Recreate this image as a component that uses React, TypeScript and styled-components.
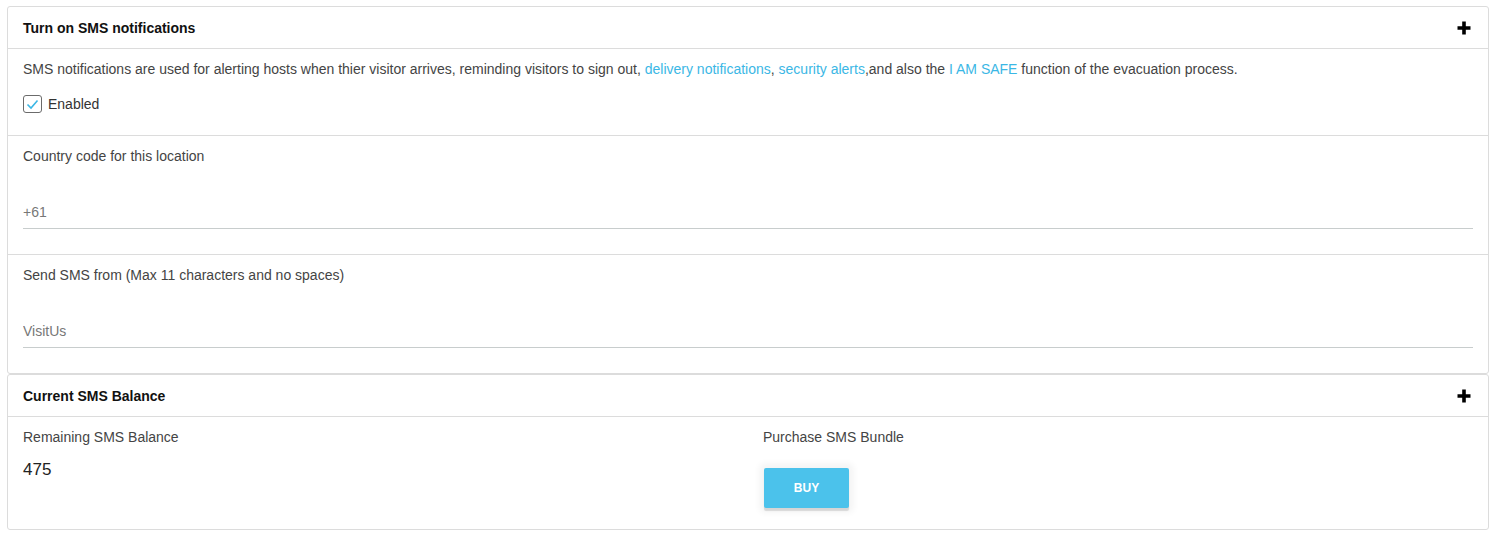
import styled, { createGlobalStyle } from 'styled-components';

const GlobalStyle = createGlobalStyle`
  body {
    margin: 0;
    padding: 6px 11px 0 7px;
    background: #fff;
    font-family: 'Liberation Sans', Arial, sans-serif;
    color: #444;
  }
`;

const Card = styled.section`
  border: 1px solid #dcdcdc;
  border-radius: 3px;
  background: #fff;
`;

const Header = styled.div`
  display: flex;
  align-items: center;
  justify-content: space-between;
  height: 41px;
  padding: 0 16px 0 15px;
  border-bottom: 1px solid #dcdcdc;
`;

const Title = styled.h3`
  margin: 0;
  font-size: 14px;
  font-weight: 700;
  color: #111;
`;

const PlusIcon = () => (
  <svg width='16' height='16' viewBox='0 0 16 16'>
    <path d='M8 1.5v13M1.5 8h13' stroke='#000' strokeWidth='3.6' />
  </svg>
);

const Section = styled.div<{ $last?: boolean }>`
  padding: 12px 15px 0;
  border-bottom: ${({ $last }) => ($last ? 'none' : '1px solid #dcdcdc')};
`;

const Text = styled.p`
  margin: 0;
  font-size: 14px;
  line-height: 16px;
  color: #444;
`;

const Link = styled.a`
  color: #3bb7e5;
  text-decoration: none;
`;

const CheckRow = styled.label`
  display: flex;
  align-items: center;
  gap: 6px;
  margin: 18px 0 22px;
  font-size: 14px;
  color: #333;
`;

const Box = styled.span`
  display: flex;
  align-items: center;
  justify-content: center;
  box-sizing: border-box;
  width: 19px;
  height: 18px;
  border: 1px solid #6b6b6b;
  border-radius: 3px;
`;

const Input = styled.input`
  display: block;
  width: 100%;
  box-sizing: border-box;
  height: 34px;
  margin: 31px 0 25px;
  padding: 0;
  border: none;
  border-bottom: 1px solid #c8cdcd;
  font-family: inherit;
  font-size: 14px;
  color: #777;
  outline: none;
  background: transparent;
`;

const Grid = styled.div`
  display: grid;
  grid-template-columns: 1fr 1fr;
  column-gap: 30px;
  padding: 12px 15px 21px;
`;

const Column = styled.div`
  display: flex;
  flex-direction: column;
  align-items: flex-start;
`;

const Balance = styled.div`
  margin-top: 15px;
  font-size: 17px;
  line-height: 20px;
  color: #222;
`;

const BuyButton = styled.button`
  margin-top: 23px;
  margin-left: 1px;
  width: 85px;
  height: 40px;
  border: none;
  border-radius: 2px;
  background: #4bc2eb;
  color: #fff;
  font-family: inherit;
  font-size: 12px;
  font-weight: 700;
  box-shadow: 0 3px 1px rgba(0, 0, 0, 0.13), 0 0 6px 5px rgba(0, 0, 0, 0.045);
  cursor: pointer;
`;

export default function App() {
  return (
    <>
      <GlobalStyle />
      <Card>
        <Header>
          <Title>Turn on SMS notifications</Title>
          <PlusIcon />
        </Header>
        <Section>
          <Text>
            SMS notifications are used for alerting hosts when thier visitor arrives, reminding visitors to sign out,{' '}
            <Link>delivery notifications</Link>, <Link>security alerts</Link>,and also the <Link>I AM SAFE</Link>{' '}
            function of the evacuation process.
          </Text>
          <CheckRow>
            <Box>
              <svg width='13' height='11' viewBox='0 0 13 11'>
                <path d='M1.5 5.5l3.5 3.5 6.5-7.5' fill='none' stroke='#3bb7e5' strokeWidth='1.6' />
              </svg>
            </Box>
            Enabled
          </CheckRow>
        </Section>
        <Section>
          <Text>Country code for this location</Text>
          <Input defaultValue='+61' />
        </Section>
        <Section $last>
          <Text>Send SMS from (Max 11 characters and no spaces)</Text>
          <Input defaultValue='VisitUs' />
        </Section>
      </Card>
      <Card>
        <Header>
          <Title>Current SMS Balance</Title>
          <PlusIcon />
        </Header>
        <Grid>
          <Column>
            <Text>Remaining SMS Balance</Text>
            <Balance>475</Balance>
          </Column>
          <Column>
            <Text>Purchase SMS Bundle</Text>
            <BuyButton>BUY</BuyButton>
          </Column>
        </Grid>
      </Card>
    </>
  );
}
